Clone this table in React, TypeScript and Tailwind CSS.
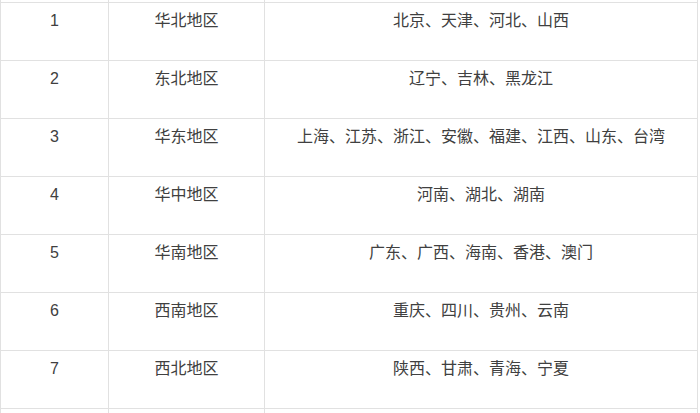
const regions = [
  { id: "1", name: "华北地区", provinces: "北京、天津、河北、山西" },
  { id: "2", name: "东北地区", provinces: "辽宁、吉林、黑龙江" },
  { id: "3", name: "华东地区", provinces: "上海、江苏、浙江、安徽、福建、江西、山东、台湾" },
  { id: "4", name: "华中地区", provinces: "河南、湖北、湖南" },
  { id: "5", name: "华南地区", provinces: "广东、广西、海南、香港、澳门" },
  { id: "6", name: "西南地区", provinces: "重庆、四川、贵州、云南" },
  { id: "7", name: "西北地区", provinces: "陕西、甘肃、青海、宁夏" },
];

const cols = "grid grid-cols-[108px_156px_433px]";
const cell = "border-r border-[#e1e1e1] text-center pt-[6px] leading-6";

export default function App() {
  return (
    <div
      className="w-[700px] h-[413px] overflow-hidden bg-white text-[16px] text-[#404040]"
      style={{ fontFamily: '"Liberation Sans", "Noto Sans CJK SC", sans-serif' }}
    >
      <div className="w-[698px] border-l border-[#e1e1e1]">
        {/* 上一行的尾部 */}
        <div className={`${cols} h-[3px] border-b border-[#e1e1e1]`}>
          <div className="border-r border-[#e1e1e1]" />
          <div className="border-r border-[#e1e1e1]" />
          <div className="border-r border-[#e1e1e1]" />
        </div>
        {regions.map((r) => (
          <div key={r.id} className={`${cols} h-[58px] border-b border-[#e1e1e1]`}>
            <div className={cell}>{r.id}</div>
            <div className={cell}>{r.name}</div>
            <div className={cell}>{r.provinces}</div>
          </div>
        ))}
        <div className={`${cols} h-[20px]`}>
          <div className="border-r border-[#e1e1e1]" />
          <div className="border-r border-[#e1e1e1]" />
          <div className="border-r border-[#e1e1e1]" />
        </div>
      </div>
    </div>
  );
}
